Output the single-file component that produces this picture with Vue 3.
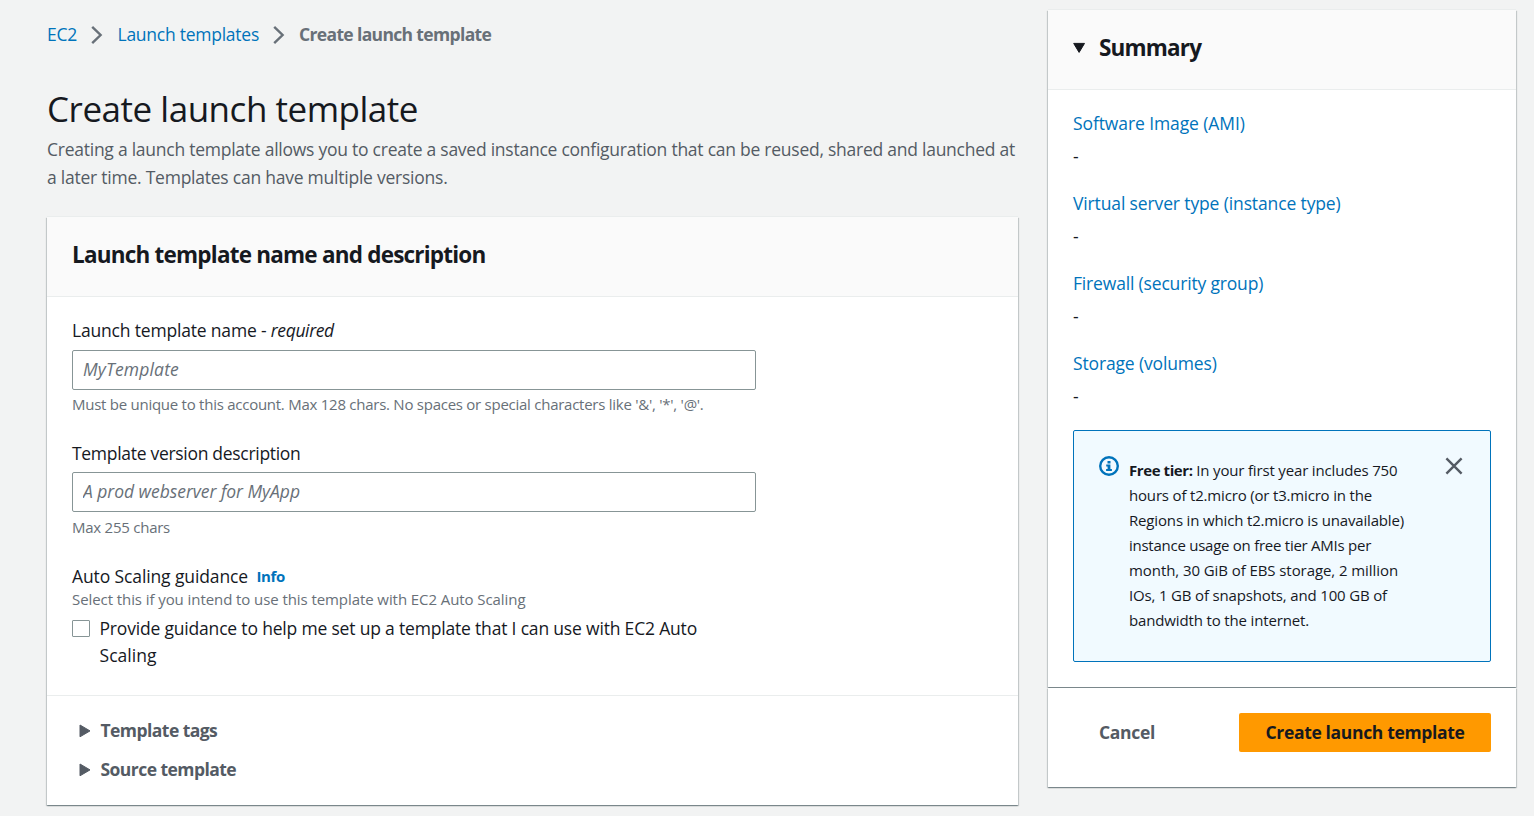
<script setup>
const crumbs = [
  { text: 'EC2', cls: 'c1' },
  { text: 'Launch templates', cls: 'c2' },
]
const summary = [
  { text: 'Software Image (AMI)', cls: 's1' },
  { text: 'Virtual server type (instance type)', cls: 's2' },
  { text: 'Firewall (security group)', cls: 's3' },
  { text: 'Storage (volumes)', cls: 's4' },
]
const freeTier = [
  { text: 'hours of t2.micro (or t3.micro in the', cls: 'f2' },
  { text: 'Regions in which t2.micro is unavailable)', cls: 'f3' },
  { text: 'instance usage on free tier AMIs per', cls: 'f4' },
  { text: 'month, 30 GiB of EBS storage, 2 million', cls: 'f5' },
  { text: 'IOs, 1 GB of snapshots, and 100 GB of', cls: 'f6' },
  { text: 'bandwidth to the internet.', cls: 'f7' },
]
</script>

<template>
  <div class="page">
    <main class="main">
      <nav class="crumbs">
        <template v-for="c in crumbs" :key="c.text">
          <a :class="c.cls">{{ c.text }}</a>
          <svg class="chev" width="12" height="20" viewBox="0 0 12 20"><path d="M1.2 1.8 9.6 10 1.2 18.2" fill="none" stroke="#687078" stroke-width="2.4" /></svg>
        </template>
        <span class="here">Create launch template</span>
      </nav>

      <h1>Create launch template</h1>
      <p class="desc">
        <span class="d1">Creating a launch template allows you to create a saved instance configuration that can be reused, shared and launched at</span><br />
        <span class="d2">a later time. Templates can have multiple versions.</span>
      </p>

      <section class="card">
        <header class="card-head"><h2 class="h-name">Launch template name and description</h2></header>
        <div class="card-body">
          <label class="label l1">Launch template name - <em>required</em></label>
          <input class="field i1" type="text" placeholder="MyTemplate" />
          <div class="help p1">Must be unique to this account. Max 128 chars. No spaces or special characters like '&amp;', '*', '@'.</div>

          <label class="label l2">Template version description</label>
          <input class="field i2" type="text" placeholder="A prod webserver for MyApp" />
          <div class="help p2">Max 255 chars</div>

          <div class="label l3"><span>Auto Scaling guidance</span><a class="info">Info</a></div>
          <div class="help p3">Select this if you intend to use this template with EC2 Auto Scaling</div>
          <div class="check">
            <span class="box"></span>
            <div class="check-text">
              <span class="k1">Provide guidance to help me set up a template that I can use with EC2 Auto</span><br />
              <span class="k2">Scaling</span>
            </div>
          </div>
        </div>
        <footer class="expanders">
          <div class="expander">
            <svg width="12" height="15" viewBox="0 0 12 15"><path d="M1 2 11 7.9 1 13.8Z" fill="#545b64" stroke="#545b64" stroke-width="1" stroke-linejoin="round" /></svg>
            <span>Template tags</span>
          </div>
          <div class="expander">
            <svg width="12" height="15" viewBox="0 0 12 15"><path d="M1 2 11 7.9 1 13.8Z" fill="#545b64" stroke="#545b64" stroke-width="1" stroke-linejoin="round" /></svg>
            <span>Source template</span>
          </div>
        </footer>
      </section>
    </main>

    <aside class="side">
      <section class="card">
        <header class="card-head sum-head">
          <svg width="14" height="12" viewBox="0 0 14 12"><path d="M.7 1.4H11.5L6.1 10.4Z" fill="#16191f" stroke="#16191f" stroke-width="1" stroke-linejoin="round" /></svg>
          <h2 class="h-sum">Summary</h2>
        </header>
        <div class="sum-body">
          <div v-for="s in summary" :key="s.text" class="sum-item">
            <a :class="s.cls">{{ s.text }}</a>
            <div>-</div>
          </div>
          <div class="alert">
            <svg class="alert-icon" width="20" height="20" viewBox="0 0 20 20">
              <circle cx="10" cy="10" r="8.8" fill="none" stroke="#0073bb" stroke-width="2.4" />
              <path d="M8.5 5h3v2.5h-3zM7.2 8.5h4.2v4.4h1.5v2.2H7.1v-2.2h1.5v-2.3H7.2z" fill="#0073bb" />
            </svg>
            <div class="alert-text">
              <div><b>Free tier:</b><span class="f1"> In your first year includes 750</span></div>
              <div v-for="f in freeTier" :key="f.cls" :class="f.cls">{{ f.text }}</div>
            </div>
            <svg class="close" width="18" height="18" viewBox="0 0 18 18"><path d="M1.4 1.4 16.6 16.6M16.6 1.4 1.4 16.6" stroke="#545b64" stroke-width="2.4" /></svg>
          </div>
        </div>
      </section>
      <section class="card actions">
        <button class="cancel">Cancel</button>
        <button class="primary">Create launch template</button>
      </section>
    </aside>
  </div>
</template>

<style>
body { background: #f2f3f3; overflow: hidden; }
</style>

<style scoped>
.page {
  box-sizing: border-box;
  width: 1534px;
  height: 816px;
  padding: 0 18px 0 47px;
  display: flex;
  gap: 30px;
  align-items: flex-start;
  background: #f2f3f3;
  color: #16191f;
  font: 400 17.5px/28px "Open Sans", "Noto Sans", sans-serif;
  white-space: nowrap;
}
h1, h2, p { margin: 0; }
a { color: #0073bb; }
.main { width: 971px; padding-top: 20px; }
.crumbs { display: flex; align-items: center; height: 28px; }
.c1 { width: 30px; letter-spacing: -.25px; }
.c2 { width: 141.5px; letter-spacing: -.25px; }
.chev { margin: 2px 14.5px 0 13.5px; }
.c1 + .chev { margin-right: 15px; }
.here { font-weight: 700; color: #687078; letter-spacing: -.65px; }
h1 { margin-top: 38px; font-size: 35px; line-height: 45px; font-weight: 400; letter-spacing: -.48px; }
.desc { margin-top: 4px; color: #545b64; }
.d1 { letter-spacing: -.25px; }
.d2 { letter-spacing: -.237px; }

.card {
  background: #fff;
  box-shadow: 0 1px 1px 0 rgba(0,28,36,.3), 1px 1px 1px 0 rgba(0,28,36,.15), -1px 1px 1px 0 rgba(0,28,36,.15);
}
.main .card { margin-top: 26px; height: 588px; }
.card-head {
  box-sizing: border-box;
  height: 80px;
  padding: 24px 25px 0;
  background: #fafafa;
  border-bottom: 1px solid #eaeded;
  box-shadow: 0 -1px 0 #eaeded;
}
h2 { font-size: 22.5px; line-height: 28px; font-weight: 700; }
.h-name { letter-spacing: -.788px; }
.h-sum { letter-spacing: -.82px; }
.card-body { padding: 19px 25px 26px; }
.label { display: block; }
.l1 { letter-spacing: -.181px; }
.l1 em { letter-spacing: -.372px; }
.l2 { margin-top: 24px; letter-spacing: -.298px; }
.l3 { margin-top: 25px; line-height: 26px; display: flex; gap: 8.5px; letter-spacing: -.117px; }
.info { font-size: 15px; font-weight: 700; letter-spacing: -.355px; }
.field {
  display: block;
  box-sizing: border-box;
  width: 684px;
  height: 40px;
  margin: 6px 0 3px;
  padding: 0 10px 2px;
  border: 1px solid #879596;
  border-radius: 2px;
  background: #fff;
  font: inherit;
  outline: none;
}
.field::placeholder { color: #687078; font-style: italic; opacity: 1; }
.i1 { letter-spacing: .169px; }
.i2 { margin: 5px 0 4px; letter-spacing: -.044px; }
.help { font-size: 15px; line-height: 22px; color: #687078; }
.p1 { letter-spacing: -.257px; }
.p2 { letter-spacing: -.246px; }
.p3 { margin-top: -1px; letter-spacing: -.077px; }
.check { display: flex; gap: 9.5px; margin-top: 5px; line-height: 27px; }
.box { box-sizing: border-box; width: 18px; height: 17px; margin-top: 5px; border: 1px solid #879596; border-radius: 1px; }
.k1 { letter-spacing: -.185px; }
.k2 { letter-spacing: .033px; }
.expanders { border-top: 1px solid #eaeded; padding: 20px 31.5px 0; display: flex; flex-direction: column; gap: 11px; }
.expander { display: flex; align-items: center; gap: 10px; font-weight: 700; color: #545b64; letter-spacing: -.55px; }

.side { width: 468px; padding-top: 10px; }
.sum-head { display: flex; gap: 12px; }
.sum-head svg { margin-top: 8px; }
.sum-body { padding: 19px 25px 25px; }
.sum-item { height: 61px; margin-bottom: 19px; display: flex; flex-direction: column; gap: 5px; }
.s1 { letter-spacing: -.1px; }
.s2 { letter-spacing: -.13px; }
.s3 { letter-spacing: -.17px; }
.s4 { letter-spacing: -.15px; }
.alert {
  box-sizing: border-box;
  height: 232px;
  margin-top: 20px;
  padding: 25px;
  display: flex;
  background: #f1faff;
  border: 1px solid #0073bb;
  border-radius: 2px;
}
.alert-text { margin: 2px 0 0 10px; width: 316px; font-size: 15px; line-height: 25px; }
.alert-text b { letter-spacing: -.421px; }
.close { margin-top: 1px; }
.f1 { letter-spacing: -.162px; }
.f2 { letter-spacing: -.174px; }
.f3 { letter-spacing: -.159px; }
.f4 { letter-spacing: -.256px; }
.f5 { letter-spacing: -.075px; }
.f6 { letter-spacing: -.163px; }
.f7 { letter-spacing: -.148px; }
.actions {
  box-sizing: border-box;
  height: 99px;
  margin-top: 1px;
  padding: 25px 25px 0 51px;
  display: flex;
  justify-content: space-between;
  align-items: flex-start;
}
button { height: 39px; padding: 0; border: 0; background: none; font: 700 17.5px/39px "Open Sans", "Noto Sans", sans-serif; }
.cancel { color: #545b64; letter-spacing: -.317px; }
.primary { width: 252px; border-radius: 2px; background: #ff9900; color: #16191f; letter-spacing: -.34px; }
</style>
